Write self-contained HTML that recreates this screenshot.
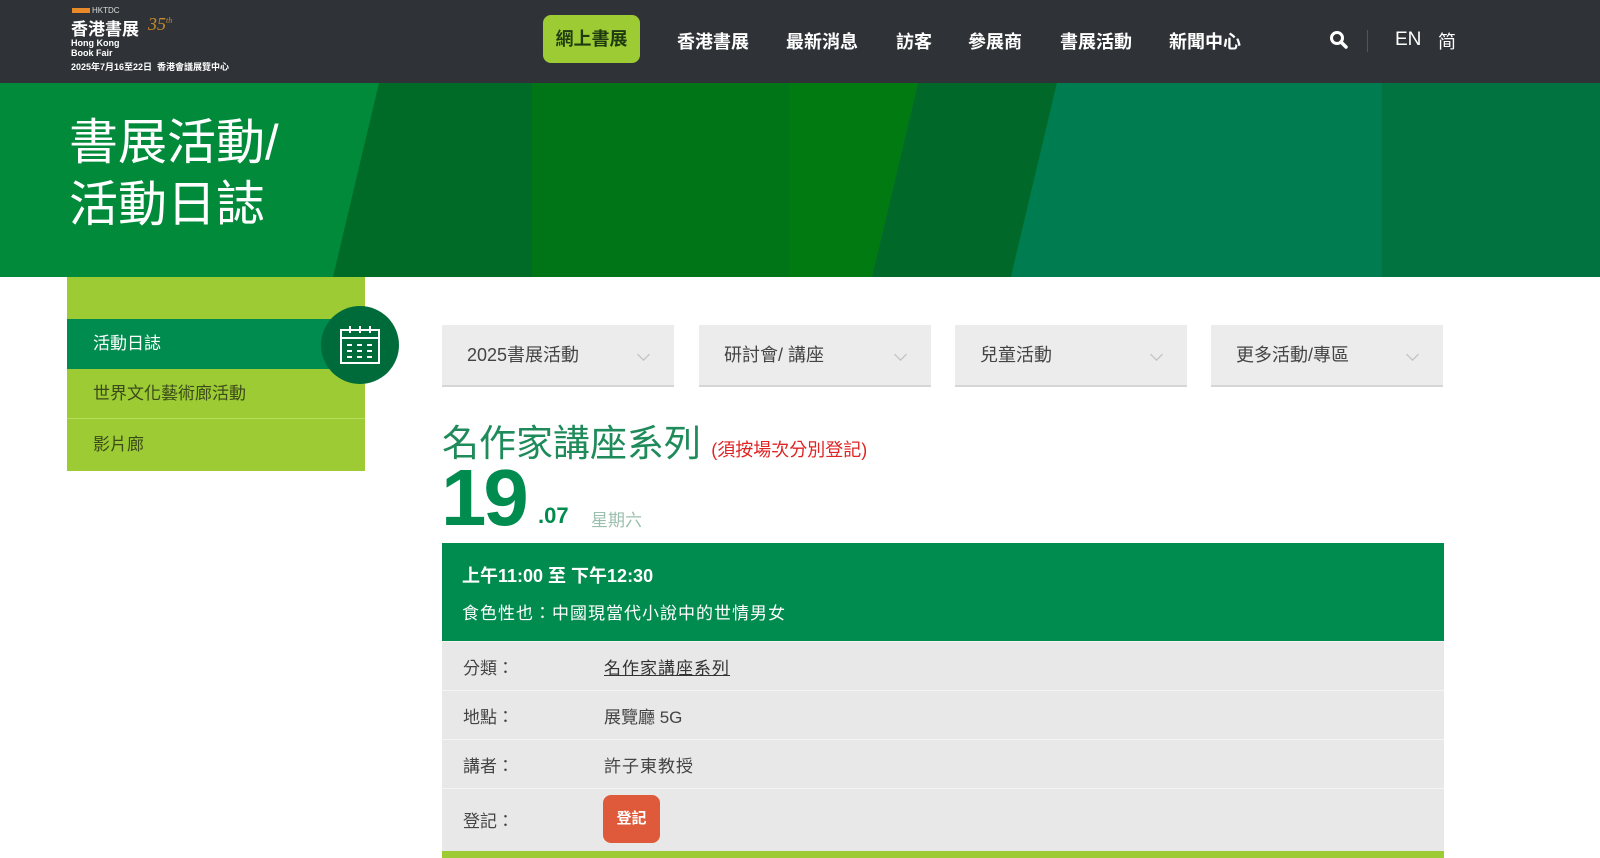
<!DOCTYPE html>
<html><head><meta charset="utf-8">
<style>
*{margin:0;padding:0;box-sizing:border-box}
body{width:1600px;height:858px;overflow:hidden;background:#fff;font-family:"Liberation Sans","Noto Sans CJK TC",sans-serif;position:relative}
.hdr{position:absolute;left:0;top:0;width:1600px;height:83px;background:#2f3337}
.abs{position:absolute;white-space:nowrap}
.nav{color:#fff;font-size:18px;font-weight:bold;top:28px}
.banner{position:absolute;left:0;top:83px;width:1600px;height:194px}
.side{position:absolute;left:67px;top:277px;width:298px;height:194px;background:#9ccb34}
.si{position:absolute;left:0;width:298px;height:50px;line-height:50px;padding-left:26px;font-size:17px;color:#3b4a1a}
.dd{position:absolute;top:325px;width:232px;height:62px;background:#ececec;border-bottom:2px solid #d6d6d6;font-size:18px;color:#444;line-height:60px;padding-left:25px}
.dd:after{content:"";position:absolute;right:26px;top:25px;width:8px;height:8px;border-right:1px solid #bbb;border-bottom:1px solid #bbb;transform:rotate(45deg)}
.row{position:absolute;left:442px;width:1002px;background:#e8e8e8;border-top:1px solid #f4f4f4;font-size:17px;color:#444}
.row span{position:absolute}
</style></head><body>
<div class="hdr">
  <div class="abs" style="left:72px;top:8px;width:18px;height:5px;background:#e88a2a"></div>
  <div class="abs" style="left:92px;top:6px;font-size:8px;color:#ddd">HKTDC</div>
  <div class="abs" style="left:71px;top:15px;font-size:17px;font-weight:bold;color:#fff">香港書展</div>
  <div class="abs" style="left:148px;top:14px;font-size:18px;font-style:italic;color:#c88a2a;font-family:'Liberation Serif',serif">35<sup style="font-size:8px">th</sup></div>
  <div class="abs" style="left:71px;top:38px;font-size:9px;font-weight:bold;color:#fff;line-height:10px">Hong Kong<br>Book Fair</div>
  <div class="abs" style="left:71px;top:60px;font-size:9px;font-weight:bold;color:#fff">2025年7月16至22日 &nbsp;香港會議展覽中心</div>
  <div class="abs" style="left:543px;top:15px;width:97px;height:48px;background:#9ccb34;border-radius:8px;color:#1d3a10;font-size:18px;font-weight:bold;line-height:48px;text-align:center">網上書展</div>
  <div class="abs nav" style="left:677px">香港書展</div>
  <div class="abs nav" style="left:786px">最新消息</div>
  <div class="abs nav" style="left:896px">訪客</div>
  <div class="abs nav" style="left:968px">參展商</div>
  <div class="abs nav" style="left:1060px">書展活動</div>
  <div class="abs nav" style="left:1169px">新聞中心</div>
  <svg class="abs" style="left:1329px;top:30px" width="20" height="20" viewBox="0 0 20 20"><circle cx="8" cy="8" r="5.5" fill="none" stroke="#fff" stroke-width="3"/><line x1="12" y1="12" x2="17" y2="17" stroke="#fff" stroke-width="3.5" stroke-linecap="round"/></svg>
  <div class="abs" style="left:1367px;top:30px;width:1px;height:22px;background:#555"></div>
  <div class="abs" style="left:1395px;top:29px;font-size:19px;color:#fff">EN</div>
  <div class="abs" style="left:1438px;top:28px;font-size:18px;color:#fff">简</div>
</div>
<svg class="banner" viewBox="0 0 1600 194" preserveAspectRatio="none">
  <rect width="1600" height="194" fill="#008a3a"/>
  <polygon points="379,0 532,0 532,194 333,194" fill="#006b26"/>
  <rect x="532" y="0" width="257" height="194" fill="#007518"/>
  <polygon points="789,0 918,0 872,194 789,194" fill="#027a12"/>
  <polygon points="918,0 1057,0 1011,194 872,194" fill="#00692a"/>
  <polygon points="1057,0 1382,0 1382,194 1011,194" fill="#007d50"/>
  <rect x="1382" y="0" width="218" height="194" fill="#007340"/>
</svg>
<div class="abs" style="left:69px;top:112px;font-size:49px;color:#fff;line-height:62px">書展活動/<br>活動日誌</div>
<div class="side">
  <div class="si" style="top:42px;background:#008b4f;color:#fff">活動日誌</div>
  <div class="si" style="top:92px;border-bottom:1px solid #b5dc5a">世界文化藝術廊活動</div>
  <div class="si" style="top:143px">影片廊</div>
</div>
<div class="abs" style="left:321px;top:306px;width:78px;height:78px;border-radius:50%;background:#006b3a"></div>
<svg class="abs" style="left:338px;top:323px" width="44" height="44" viewBox="0 0 44 44" fill="none" stroke="#fff" stroke-width="2">
  <rect x="3" y="7" width="38" height="33"/><line x1="3" y1="15" x2="41" y2="15"/>
  <line x1="12" y1="3" x2="12" y2="10"/><line x1="22" y1="3" x2="22" y2="10"/><line x1="32" y1="3" x2="32" y2="10"/>
  <path d="M9 22h5M19 22h5M29 22h5M9 28h5M19 28h5M29 28h5M9 34h5M19 34h5M29 34h5"/>
</svg>
<div class="dd" style="left:442px">2025書展活動</div>
<div class="dd" style="left:699px">研討會/ 講座</div>
<div class="dd" style="left:955px">兒童活動</div>
<div class="dd" style="left:1211px">更多活動/專區</div>
<div class="abs" style="left:442px;top:413px;font-size:37px;color:#1f8a5a">名作家講座系列 <span style="font-size:18px;color:#e02424">(須按場次分別登記)</span></div>
<div class="abs" style="left:441px;top:458px;font-size:80px;font-weight:bold;color:#008b4f;line-height:80px;letter-spacing:-3px;transform:scaleX(1.02);transform-origin:left">19</div>
<div class="abs" style="left:538px;top:503px;font-size:22px;font-weight:bold;color:#008b4f">.07</div>
<div class="abs" style="left:591px;top:506px;font-size:17px;color:#9bbfae">星期六</div>
<div class="abs" style="left:442px;top:543px;width:1002px;height:98px;background:#008b4f"></div>
<div class="abs" style="left:462px;top:562px;font-size:18px;font-weight:bold;color:#fff">上午11:00 至 下午12:30</div>
<div class="abs" style="left:462px;top:599px;font-size:17px;color:#fff;letter-spacing:1px">食色性也：中國現當代小說中的世情男女</div>
<div class="row" style="top:641px;height:49px"><span style="left:21px;top:12px">分類：</span><span style="left:162px;top:12px;text-decoration:underline;color:#333;letter-spacing:1px">名作家講座系列</span></div>
<div class="row" style="top:690px;height:49px"><span style="left:21px;top:12px">地點：</span><span style="left:162px;top:12px">展覽廳 5G</span></div>
<div class="row" style="top:739px;height:49px"><span style="left:21px;top:12px">講者：</span><span style="left:162px;top:12px;letter-spacing:1px">許子東教授</span></div>
<div class="row" style="top:788px;height:63px"><span style="left:21px;top:18px">登記：</span><span style="left:161px;top:6px;width:57px;height:48px;background:#de5a3a;border-radius:8px;color:#fff;font-size:15px;font-weight:bold;line-height:48px;text-align:center">登記</span></div>
<div class="abs" style="left:442px;top:851px;width:1002px;height:7px;background:#9ccb34"></div>
</body></html>
